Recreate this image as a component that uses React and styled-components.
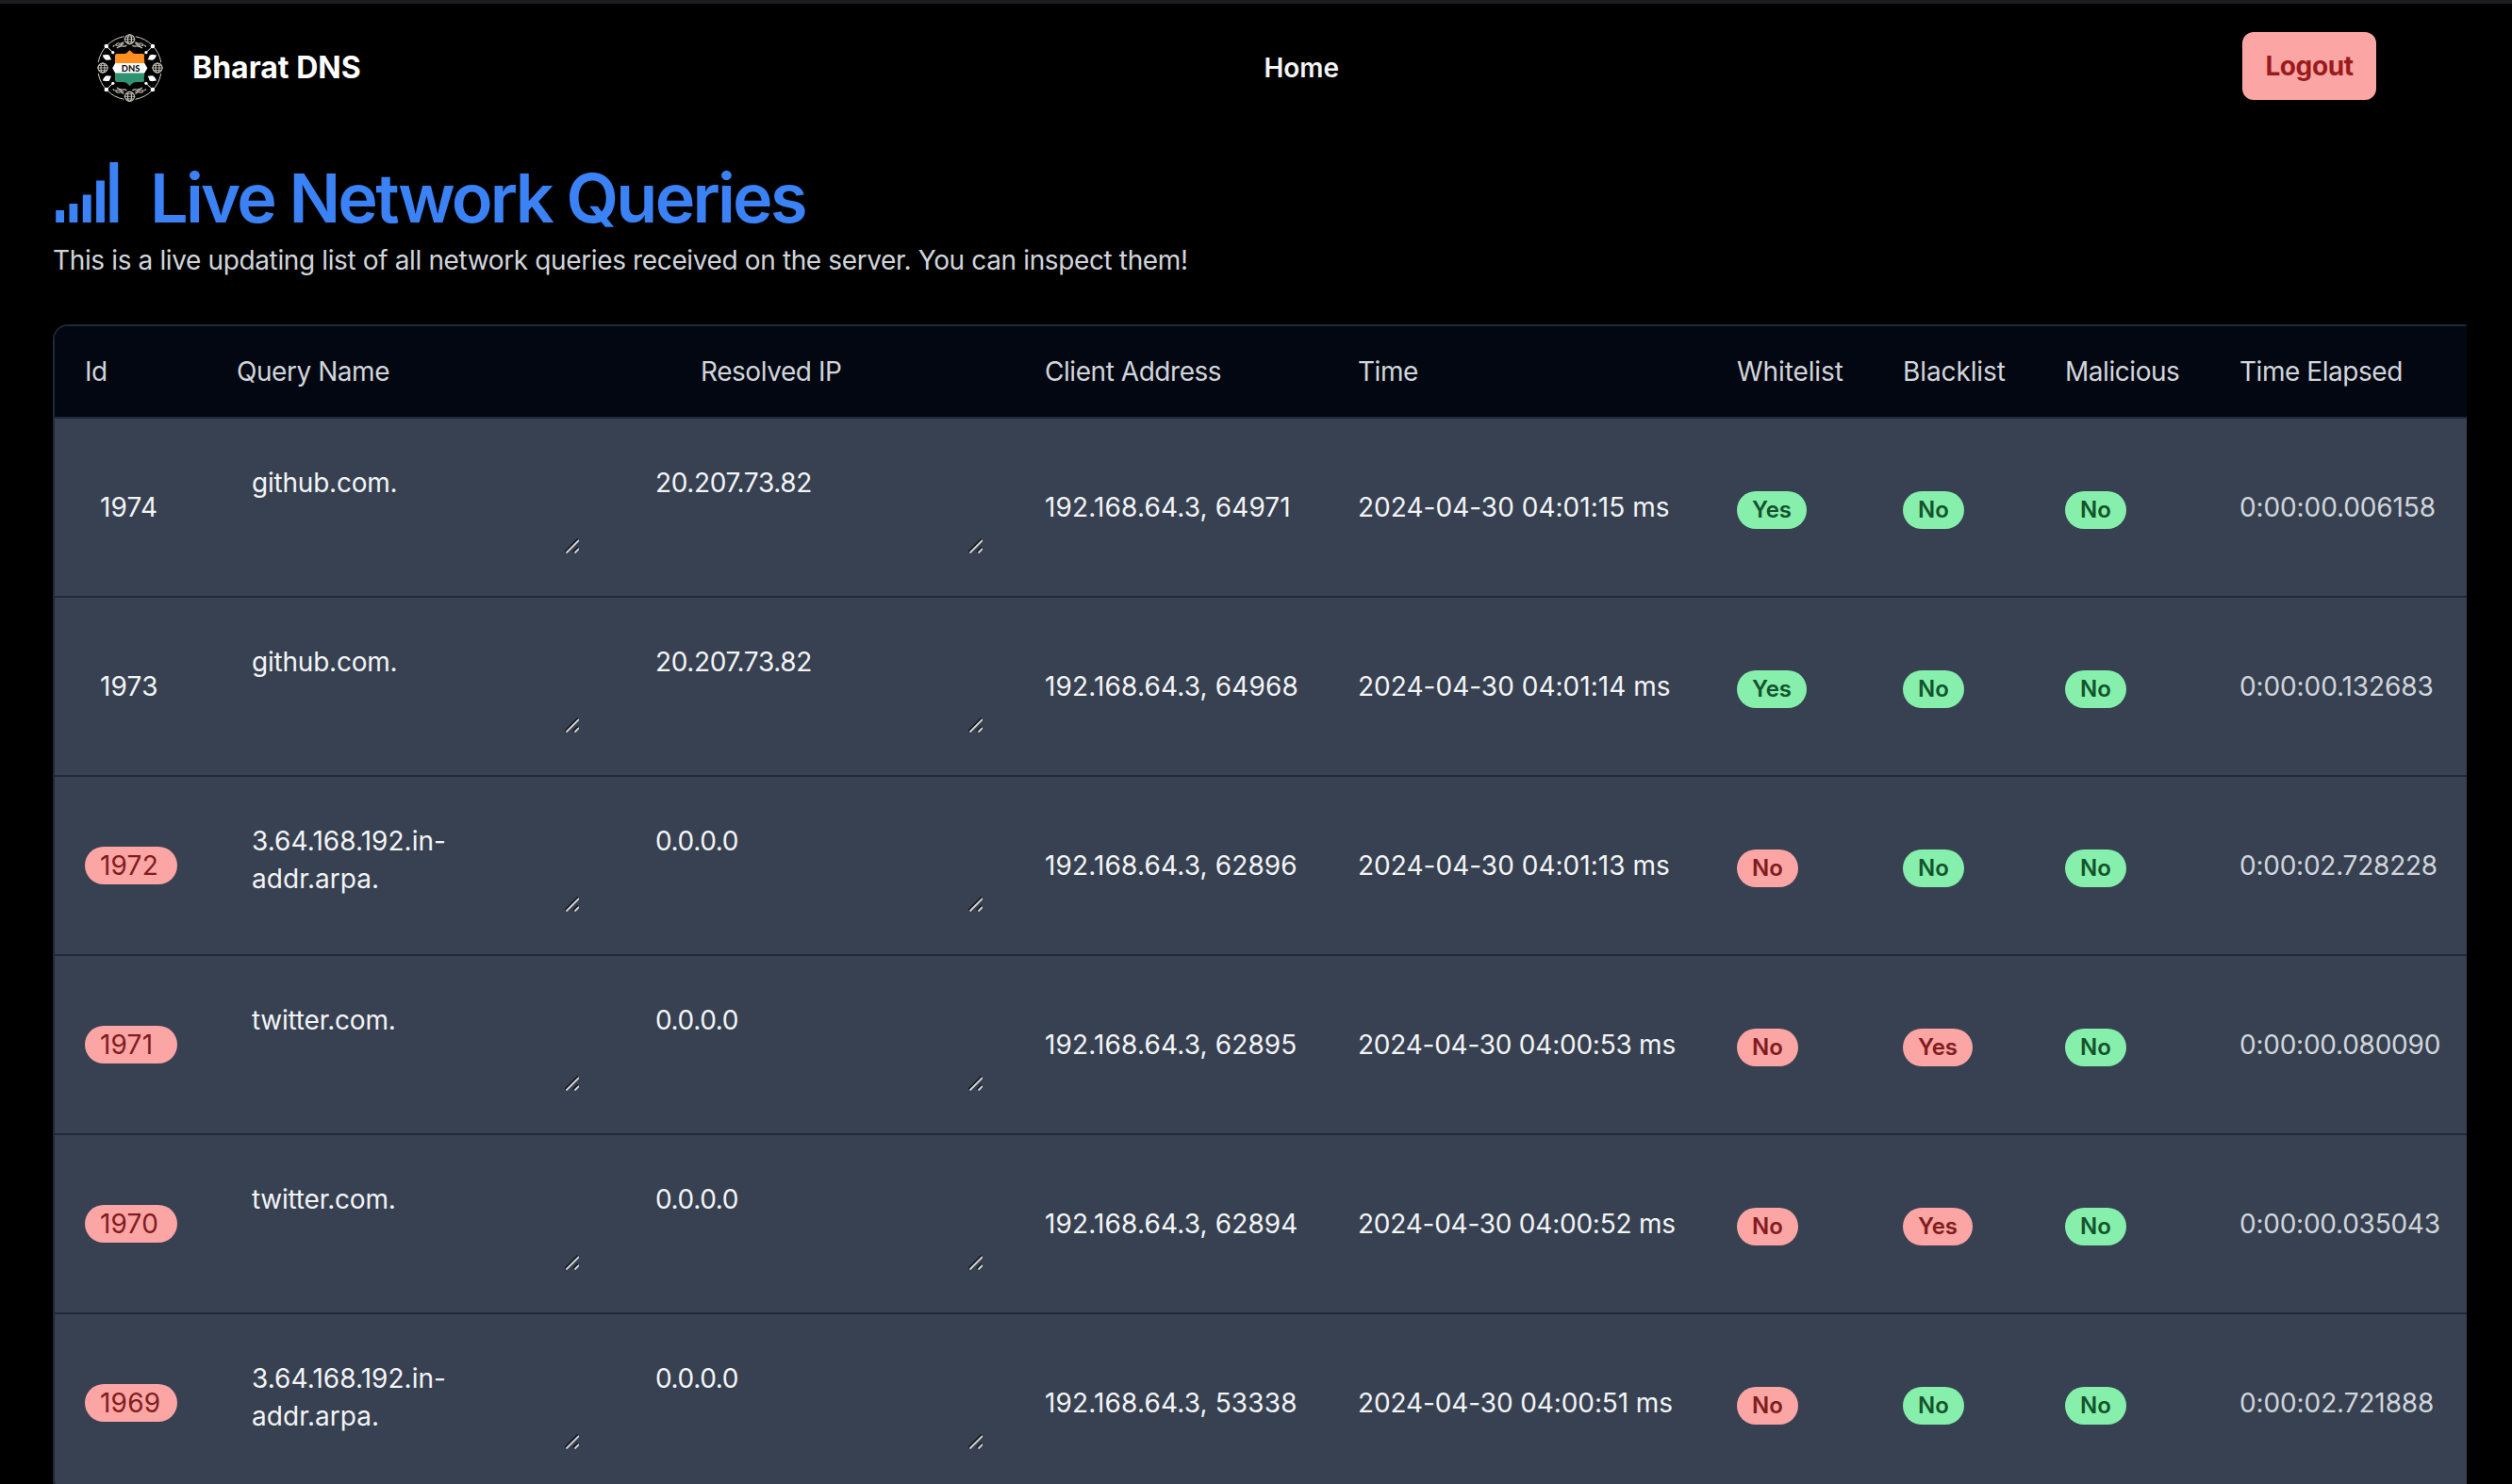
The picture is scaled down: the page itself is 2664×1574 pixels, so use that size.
import React from "react";
import styled, { createGlobalStyle } from "styled-components";

const GlobalStyle = createGlobalStyle`
  *, *::before, *::after { box-sizing: border-box; }
  html, body { margin: 0; background: #000; }
  body {
    height: 1574px;
    overflow: hidden;
    font-family: Inter, "Liberation Sans", sans-serif;
    font-size: 28px;
    line-height: 40px;
    color: #f3f4f6;
  }
`;

const Page = styled.div`
  height: 1574px;
  overflow: hidden;
  border-top: 4px solid #1d1d21;
  background: #000;
`;

const NavBar = styled.header`
  display: flex;
  justify-content: space-between;
  align-items: center;
  height: 132px;
  padding: 0 144px 0 100px;
`;

const Brand = styled.div`
  display: flex;
  align-items: center;
  gap: 28px;
  padding-top: 4px;
`;

const BrandName = styled.span`
  font-size: 32px;
  font-weight: 700;
  letter-spacing: 0;
  white-space: nowrap;
  color: #fff;
`;

const NavLink = styled.a`
  padding-top: 4px;
  font-weight: 600;
  color: #f3f4f6;
`;

const LogoutButton = styled.button`
  width: 142px;
  height: 72px;
  padding: 0;
  border: 0;
  border-radius: 12px;
  background: #fca5a5;
  color: #991b1b;
  font: 700 28px/40px Inter, "Liberation Sans", sans-serif;
  letter-spacing: -0.4px;
`;

const Main = styled.main`
  width: 2616px;
  padding-left: 56px;
  overflow: hidden;
`;

const Title = styled.h1`
  display: flex;
  align-items: center;
  gap: 27px;
  height: 92px;
  margin: 28px 0 0;
  font-size: 72px;
  font-weight: 600;
  line-height: 80px;
  letter-spacing: -2.75px;
  white-space: nowrap;
  color: #3b82f6;

  svg {
    margin-bottom: 12px;
  }
`;

const Subtitle = styled.p`
  margin: 0 0 48px;
  letter-spacing: -0.37px;
  white-space: nowrap;
  color: #d1d5db;
`;

const Table = styled.div`
  width: 2572px;
  border: 2px solid #1f2937;
  border-radius: 16px;
  overflow: hidden;
`;

const Row = styled.div`
  display: grid;
  grid-template-columns: 161px 428px 429px 332px 402px 176px 172px 185px 1fr;
  align-items: center;
  height: 190px;
  padding-left: 32px;
  border-bottom: 2px solid #1f2937;
  background: #374151;
  white-space: nowrap;
`;

const HeaderRow = styled(Row)`
  height: 98px;
  background: #030712;
  color: #d1d5db;
`;

const HeaderCell = styled.div`
  padding-left: ${(p) => p.$indent || 0}px;
  letter-spacing: ${(p) => p.$track ?? -0.45}px;
`;

const Cell = styled.div`
  letter-spacing: ${(p) => p.$track || 0}px;
  color: ${(p) => (p.$muted ? "#d1d5db" : "inherit")};
`;

const IdTag = styled.span`
  display: inline-block;
  min-width: 98px;
  padding: 0 16px;
  border-radius: 20px;
  background: ${(p) => (p.$blocked ? "#fca5a5" : "transparent")};
  color: ${(p) => (p.$blocked ? "#7f1d1d" : "#f3f4f6")};
  letter-spacing: 0.2px;
`;

const Flag = styled.span`
  display: block;
  width: ${(p) => (p.$wide ? 74 : 65)}px;
  height: 40px;
  margin-top: 6px;
  border-radius: 20px;
  background: ${(p) => (p.$good ? "#86efac" : "#fca5a5")};
  color: ${(p) => (p.$good ? "#14532d" : "#7f1d1d")};
  font-size: 24px;
  font-weight: 600;
  text-align: center;
`;

const Field = styled.div`
  position: relative;
  width: 365px;
  height: 104px;
  margin-bottom: 4px;
  padding: 8px 16px;
  letter-spacing: ${(p) => p.$track || 0}px;
  white-space: normal;
`;

const Grip = styled.svg`
  position: absolute;
  right: 2px;
  bottom: 1px;
  display: block;
`;

function Emblem() {
  const line = { fill: "none", stroke: "#cfcbc0", strokeWidth: 1.1 };
  const globes = [[37.5, 7.7], [37.5, 68.3], [9, 38], [67, 38]];
  const nodes = [[12.8, 15], [61.9, 15], [12.8, 61], [61.9, 61]];
  return (
    <svg width="76" height="76" viewBox="0 0 76 76">
      <circle cx="37.5" cy="38" r="33.8" {...line} strokeWidth="1" strokeDasharray="41 12.1" strokeDashoffset="-6" />
      {globes.map(([x, y]) => (
        <g key={`${x}-${y}`} {...line}>
          <circle cx={x} cy={y} r="5" fill="#000" />
          <ellipse cx={x} cy={y} rx="2" ry="5" />
          <path d={`M${x - 6} ${y}h12M${x - 4} ${y - 2.6}h8M${x - 4} ${y + 2.6}h8`} strokeWidth="0.8" />
        </g>
      ))}
      {nodes.map(([x, y]) => {
        const dx = x < 38 ? 1 : -1;
        const dy = y < 38 ? 1 : -1;
        return (
          <g key={`${x}-${y}`}>
            <path d={`M${x} ${y}l${7 * dx} ${6.7 * dy}`} stroke="#fff" strokeWidth="1" />
            <circle cx={x} cy={y} r="2.3" fill="#fff" />
            <circle cx={x + 7 * dx} cy={y + 6.7 * dy} r="1.6" fill="#fff" />
            <circle cx={x + 1 * dx} cy={y + 11.8 * dy} r="2.9" fill="#fff" />
            <path
              d={`M${x - 4 * dx} ${y + 9.4 * dy}l${5 * dx} ${-0.6 * dy}v${5.8 * dy}q${-4 * dx} ${-1 * dy} ${-5 * dx} ${-5.2 * dy}zM${x + 2 * dx} ${y + 14.6 * dy}l${3.4 * dx} ${-0.4 * dy}l${-1.8 * dx} ${-3 * dy}z`}
              fill="#fff"
            />
            <path
              d={`M${x + 7 * dx} ${y + 0.5 * dy}l${1.6 * dx} ${-1.5 * dy}M${x + 9.5 * dx} ${y - 1 * dy}q${2 * dx} ${-3 * dy} ${4 * dx} ${-2 * dy}t${5 * dx} ${-1.5 * dy}M${x + 9.5 * dx} ${y - 1 * dy}q${4 * dx} ${1 * dy} ${9 * dx} ${-1.4 * dy}M${x + 11 * dx} ${y + 2 * dy}q${4 * dx} ${-2.6 * dy} ${6.5 * dx} ${-2 * dy}t${4 * dx} ${-1 * dy}`}
              {...line}
            />
          </g>
        );
      })}
      <path d="M22 34v-9q0-2 2-2h6q4 0 5-1.6l2.6-2.2 2.6 2.2q1 1.6 5 1.6h6q2 0 2 2q-1 2 0 4.5v4.5z" fill="#ff8f1f" />
      <path d="M22 42v9q0 2 2 2h6q4 0 5 1.8l2.6 2.4 2.6-2.4q1-1.8 5-1.8h6q2 0 2-2q-1-2 0-4.5v-4.5z" fill="#2f9270" />
      <path d="M19.2 38.2l3-5.2h31l3.2 5.2-3.2 5.4h-31z" fill="#fff" />
      <text x="38.6" y="41.5" textAnchor="middle" fontFamily="Lato, sans-serif" fontWeight="900" fontSize="9.4" fill="#111">DNS</text>
    </svg>
  );
}

function SignalIcon() {
  const tops = [223, 216, 206.5, 191.5, 172];
  return (
    <svg width="76" height="68" viewBox="56 170 76 68">
      {tops.map((top, i) => (
        <rect key={top} x={59.2 + i * 14.3} y={top} width="8.8" height={236 - top} fill="#3b82f6" />
      ))}
    </svg>
  );
}

function EditableField({ track, children }) {
  return (
    <Field $track={track}>
      {children}
      <Grip width="15" height="16" viewBox="0 0 15 16">
        <path d="M0 14.5L14 0.5M9 14.5L14 9.5" stroke="#15181e" strokeWidth="1.9" />
        <path d="M1.5 15.5L15 2M10.5 15.5L15 11" stroke="#d6d6d6" strokeWidth="1.9" />
      </Grip>
    </Field>
  );
}

const queries = [
  { id: 1974, name: "github.com.", ip: "20.207.73.82", port: 64971, time: "04:01:15", flags: [1, 0, 0], elapsed: "0:00:00.006158" },
  { id: 1973, name: "github.com.", ip: "20.207.73.82", port: 64968, time: "04:01:14", flags: [1, 0, 0], elapsed: "0:00:00.132683" },
  { id: 1972, name: "3.64.168.192.in-addr.arpa.", ip: "0.0.0.0", port: 62896, time: "04:01:13", flags: [0, 0, 0], elapsed: "0:00:02.728228" },
  { id: 1971, name: "twitter.com.", ip: "0.0.0.0", port: 62895, time: "04:00:53", flags: [0, 1, 0], elapsed: "0:00:00.080090" },
  { id: 1970, name: "twitter.com.", ip: "0.0.0.0", port: 62894, time: "04:00:52", flags: [0, 1, 0], elapsed: "0:00:00.035043" },
  { id: 1969, name: "3.64.168.192.in-addr.arpa.", ip: "0.0.0.0", port: 53338, time: "04:00:51", flags: [0, 0, 0], elapsed: "0:00:02.721888" },
];

const trackFor = (text, base) => base + (text.split("1").length - 1) * 0.13;

export default function App() {
  return (
    <Page>
      <GlobalStyle />
      <NavBar>
        <Brand>
          <Emblem />
          <BrandName>Bharat DNS</BrandName>
        </Brand>
        <NavLink>Home</NavLink>
        <LogoutButton>Logout</LogoutButton>
      </NavBar>
      <Main>
        <Title>
          <SignalIcon />
          <span>Live Network Queries</span>
        </Title>
        <Subtitle>
          This is a live updating list of all network queries received on the server. You can inspect them!
        </Subtitle>
        <Table>
          <HeaderRow>
            <HeaderCell>Id</HeaderCell>
            <HeaderCell>Query Name</HeaderCell>
            <HeaderCell $indent={64}>Resolved IP</HeaderCell>
            <HeaderCell>Client Address</HeaderCell>
            <HeaderCell>Time</HeaderCell>
            <HeaderCell $track={-0.1}>Whitelist</HeaderCell>
            <HeaderCell $track={-0.1}>Blacklist</HeaderCell>
            <HeaderCell>Malicious</HeaderCell>
            <HeaderCell>Time Elapsed</HeaderCell>
          </HeaderRow>
          {queries.map((q) => (
            <Row key={q.id}>
              <Cell>
                <IdTag $blocked={!q.flags[0]}>{q.id}</IdTag>
              </Cell>
              <EditableField track={trackFor(q.name, -0.22)}>{q.name}</EditableField>
              <EditableField track={-0.35}>{q.ip}</EditableField>
              <Cell $track={0.14}>192.168.64.3, {q.port}</Cell>
              <Cell $track={trackFor(q.time, -0.24)}>2024-04-30 {q.time} ms</Cell>
              {q.flags.map((on, i) => (
                <Flag key={i} $wide={!!on} $good={i === 0 ? !!on : !on}>
                  {on ? "Yes" : "No"}
                </Flag>
              ))}
              <Cell $muted $track={trackFor(q.elapsed, -0.24)}>{q.elapsed}</Cell>
            </Row>
          ))}
        </Table>
      </Main>
    </Page>
  );
}
